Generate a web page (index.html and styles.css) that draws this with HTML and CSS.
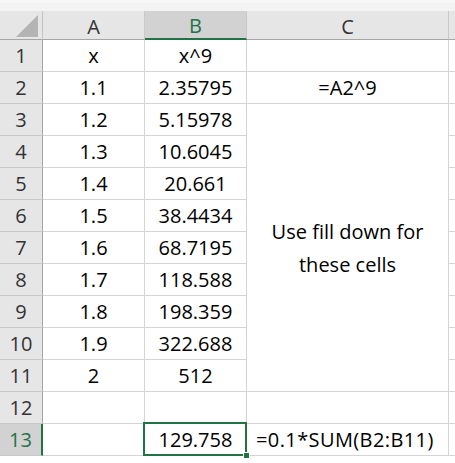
FILE: index.html
```html
<!DOCTYPE html>
<html>
<head>
<meta charset="utf-8">
<link rel="stylesheet" href="styles.css">
</head>
<body>
<div class="topbar"></div>
<div class="sheet">
  <div class="corner"><svg width="26" height="24" viewBox="0 0 26 24"><polygon points="24,1 24,23 2,23" fill="#b4b4b4"/></svg></div>
  <div class="colhead">A</div>
  <div class="colhead sel">B</div>
  <div class="colhead">C</div>
  <div class="colhead last"></div>

  <div class="rowhead">1</div><div class="cell">x</div><div class="cell">x^9</div><div class="cell"></div><div class="cell d"></div>
  <div class="rowhead">2</div><div class="cell">1.1</div><div class="cell">2.35795</div><div class="cell">=A2^9</div><div class="cell d"></div>
  <div class="rowhead">3</div><div class="cell">1.2</div><div class="cell">5.15978</div><div class="cell merged">Use fill down for<br>these cells</div><div class="cell d"></div>
  <div class="rowhead">4</div><div class="cell">1.3</div><div class="cell">10.6045</div><div class="cell d"></div>
  <div class="rowhead">5</div><div class="cell">1.4</div><div class="cell">20.661</div><div class="cell d"></div>
  <div class="rowhead">6</div><div class="cell">1.5</div><div class="cell">38.4434</div><div class="cell d"></div>
  <div class="rowhead">7</div><div class="cell">1.6</div><div class="cell">68.7195</div><div class="cell d"></div>
  <div class="rowhead">8</div><div class="cell">1.7</div><div class="cell">118.588</div><div class="cell d"></div>
  <div class="rowhead">9</div><div class="cell">1.8</div><div class="cell">198.359</div><div class="cell d"></div>
  <div class="rowhead">10</div><div class="cell">1.9</div><div class="cell">322.688</div><div class="cell d"></div>
  <div class="rowhead">11</div><div class="cell">2</div><div class="cell">512</div><div class="cell d"></div>
  <div class="rowhead">12</div><div class="cell"></div><div class="cell"></div><div class="cell"></div><div class="cell d"></div>
  <div class="rowhead sel">13</div><div class="cell"></div><div class="cell active">129.758<span class="handle"></span></div><div class="cell left">=0.1*SUM(B2:B11)</div><div class="cell d"></div>
</div>
</body>
</html>
```
FILE: styles.css
```css
html, body {
  margin: 0;
  padding: 0;
  background: #ffffff;
}
body {
  font-family: "Open Sans", "Liberation Sans", sans-serif;
  width: 455px;
  height: 463px;
  overflow: hidden;
}
.topbar {
  height: 11px;
  background: #f3f3f3;
  box-sizing: border-box;
  border-top: 3px solid #f7f7f7;
}
.sheet {
  display: grid;
  grid-template-columns: 43px 102px 102px 202px 1fr;
  grid-template-rows: 29px repeat(13, 32px);
}
.corner {
  background: #e6e6e6;
  border-right: 1px solid #c4c4c4;
  border-bottom: 1px solid #a6a6a6;
  display: flex;
  align-items: flex-end;
  justify-content: flex-end;
  padding: 0 2px 1px 0;
}
.corner svg { display: block; }
.colhead {
  background: #e6e6e6;
  border-right: 1px solid #c8c8c8;
  border-bottom: 1px solid #a6a6a6;
  display: flex;
  align-items: center;
  justify-content: center;
  font-size: 20px;
  color: #333333;
  padding-top: 2px;
}
.colhead.last { border-right: none; }
.colhead.sel {
  background: #d2d2d2;
  color: #217346;
  border-bottom: 2px solid #217346;
}
.rowhead {
  background: #e6e6e6;
  border-right: 1px solid #a6a6a6;
  border-bottom: 1px solid #c8c8c8;
  display: flex;
  align-items: center;
  justify-content: center;
  font-size: 20px;
  color: #333333;
}
.rowhead.sel {
  background: #d2d2d2;
  color: #217346;
  border-right: 2px solid #217346;
}
.cell {
  border-right: 1px solid #d4d4d4;
  border-bottom: 1px solid #d4d4d4;
  display: flex;
  align-items: center;
  justify-content: center;
  font-size: 20px;
  color: #000000;
  white-space: nowrap;
  position: relative;
}
.cell.d { border-right: none; }
.cell.merged {
  grid-row: span 9;
  text-align: center;
  line-height: 33px;
  white-space: normal;
}
.cell.left {
  justify-content: flex-start;
  padding-left: 9px;
  letter-spacing: 0.4px;
}
.cell.active::before {
  content: "";
  position: absolute;
  left: -2px;
  top: -2px;
  right: -1px;
  bottom: -1px;
  border: 2px solid #217346;
}
.handle {
  position: absolute;
  right: -4px;
  bottom: -4px;
  width: 5px;
  height: 5px;
  background: #217346;
  border: 1px solid #ffffff;
  z-index: 2;
}
```
